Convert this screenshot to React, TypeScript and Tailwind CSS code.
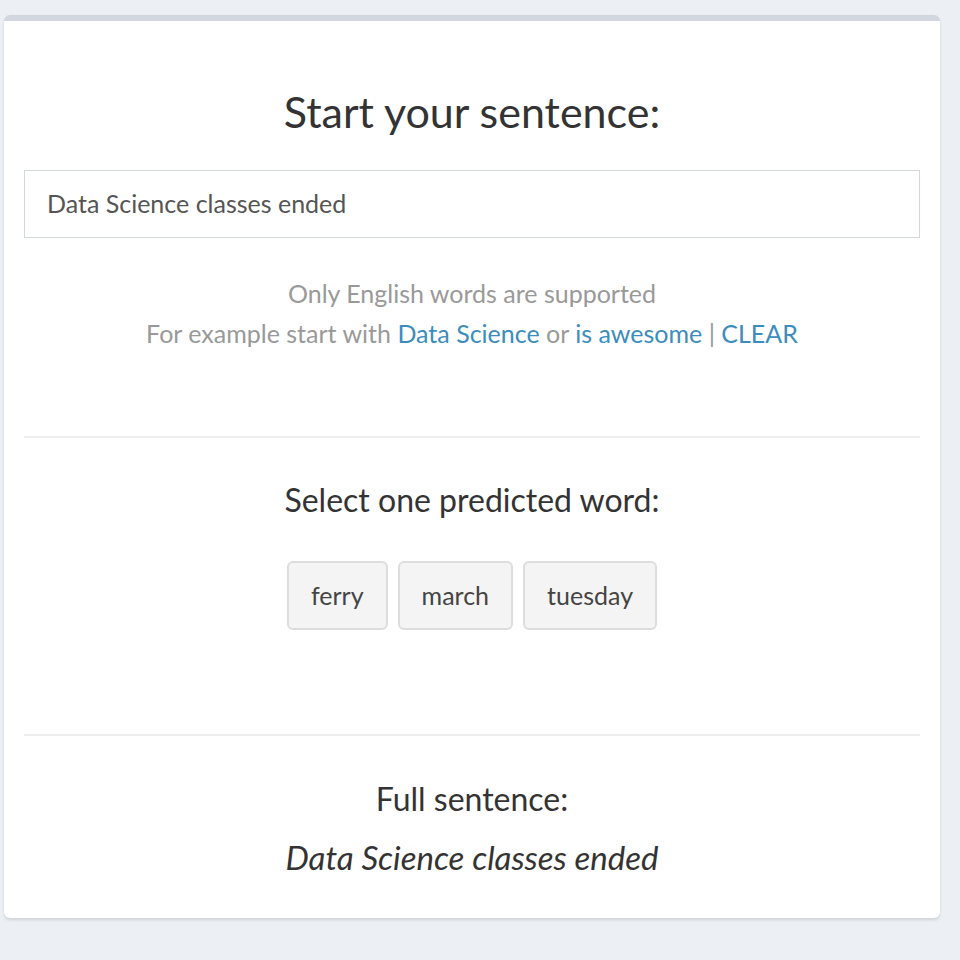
import React from "react";

export default function App() {
  const words = ["ferry", "march", "tuesday"];
  return (
    <div
      className="min-h-[960px] w-[960px] bg-[#ecf0f5] pt-[15px] pl-[4px]"
      style={{ fontFamily: "Lato, 'Noto Sans', sans-serif" }}
    >
      <div className="w-[936px] h-[903px] bg-white border-t-[6px] border-[#d2d6de] rounded-[6px] shadow-[0_2px_3px_rgba(0,0,0,0.12)] px-[20px] pt-[67px]">
        <h3 className="text-center text-[43px] leading-[48px] text-[#333]">Start your sentence:</h3>
        <div className="mt-[34px] h-[68px] border border-[#d2d6de] flex items-center pl-[22px] text-[25px] text-[#555]">
          Data Science classes ended
        </div>
        <div className="mt-[35px] text-center text-[25px] leading-[40px] text-[#999]">
          <div>Only English words are supported</div>
          <div>
            For example start with <span className="text-[#3c8dbc]">Data Science</span> or{" "}
            <span className="text-[#3c8dbc]">is awesome</span> | <span className="text-[#3c8dbc]">CLEAR</span>
          </div>
        </div>
        <div className="mt-[83px] h-[2px] bg-[#eeeeee]" />
        <h4 className="mt-[42px] text-center text-[32px] leading-[40px] text-[#333]">Select one predicted word:</h4>
        <div className="mt-[41px] flex justify-center gap-[10px]">
          {words.map((w) => (
            <button
              key={w}
              className="h-[69px] px-[22px] bg-[#f4f4f4] border-2 border-[#dddddd] rounded-[6px] text-[25px] text-[#444]"
            >
              {w}
            </button>
          ))}
        </div>
        <div className="mt-[104px] h-[2px] bg-[#eeeeee]" />
        <h4 className="mt-[43px] text-center text-[32px] leading-[40px] text-[#333]">Full sentence:</h4>
        <div className="mt-[18px] text-center text-[33px] leading-[40px] italic text-[#333]">
          Data Science classes ended
        </div>
      </div>
    </div>
  );
}
